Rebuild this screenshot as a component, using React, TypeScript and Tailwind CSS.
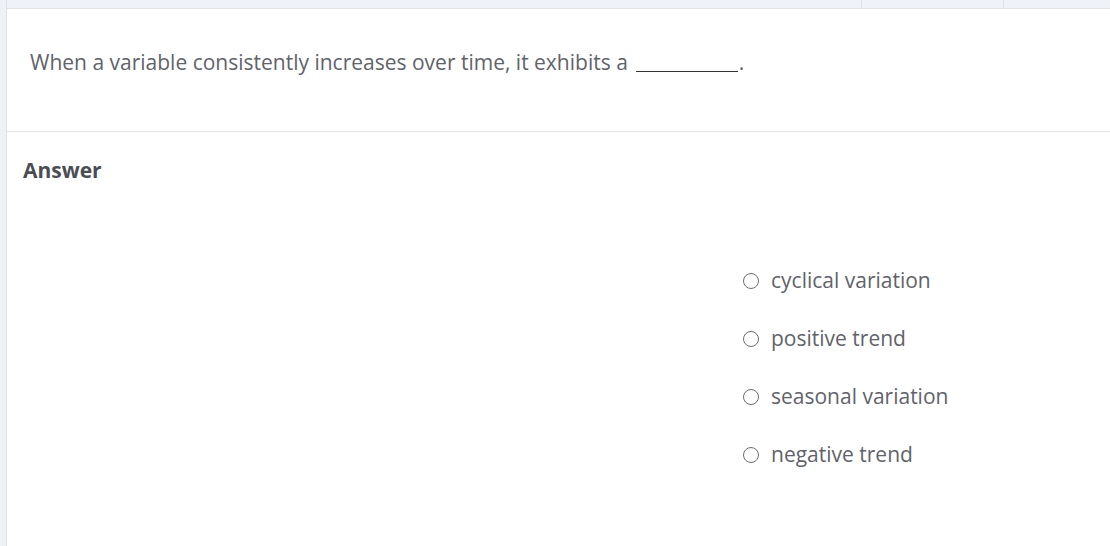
export default function App() {
  const opts = ["cyclical variation", "positive trend", "seasonal variation", "negative trend"];
  return (
    <div className="flex h-[546px] w-[1110px] bg-white overflow-hidden" style={{ fontFamily: '"Open Sans", sans-serif' }}>
      <div className="w-[7px] shrink-0 bg-[#eef2f6] border-r border-[#dfe3e8]" />
      <div className="flex flex-1 flex-col">
        <div className="flex h-[9px] shrink-0 border-b border-[#dfe3e8] bg-[#eff3f7]">
          <div className="w-[855px] border-r border-[#dfe3e8]" />
          <div className="w-[142px] border-r border-[#dfe3e8]" />
          <div className="flex-1" />
        </div>
        <div className="flex h-[123px] shrink-0 items-start border-b border-[#e2e4e7] pl-[23px] pt-[39px] text-[21px] leading-[28px] text-[#5f636a]">
          <span>When a variable consistently increases over time, it exhibits a</span>
          <span className="ml-[8px] inline-block w-[102px] border-b border-[#333] h-[24px]" />
          <span className="ml-[1px]">.</span>
        </div>
        <div className="pl-[16px] pt-[24px] text-[21px] leading-[28px] font-bold text-[#4a4d53]">Answer</div>
        <div className="ml-[736px] mt-[82px] flex flex-col gap-[29px]">
          {opts.map((o) => (
            <div key={o} className="flex h-[29px] items-center text-[21px] text-[#5f636a]">
              <span className="inline-block h-[16px] w-[16px] rounded-full border-[1.5px] border-[#6a6d72]" />
              <span className="ml-[12px]">{o}</span>
            </div>
          ))}
        </div>
      </div>
    </div>
  );
}
